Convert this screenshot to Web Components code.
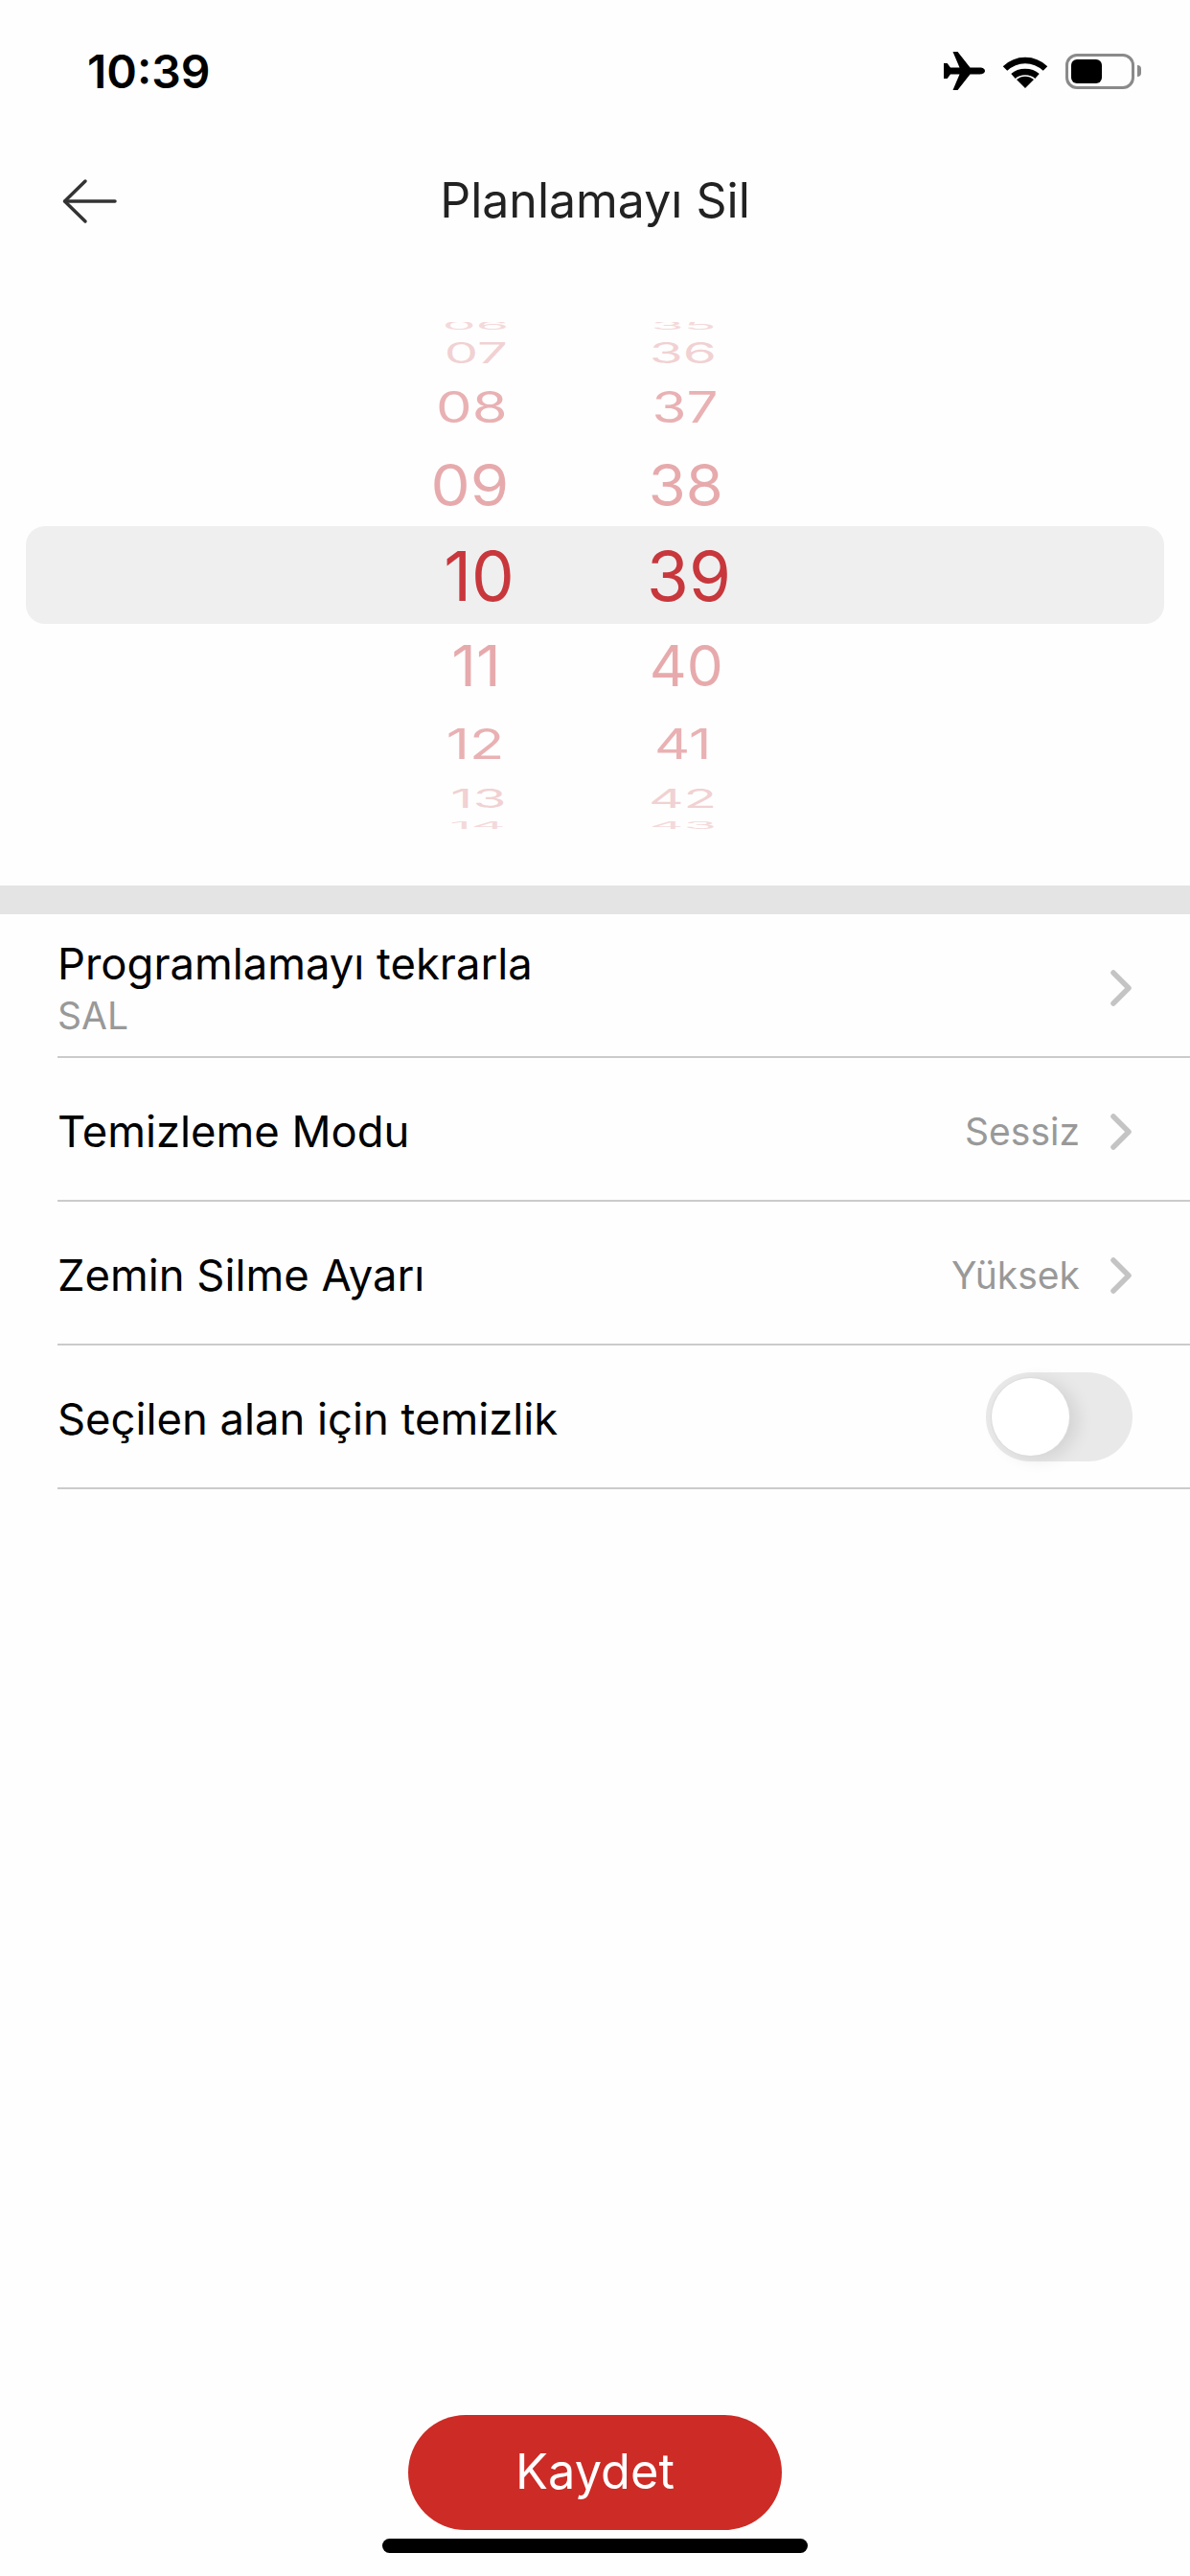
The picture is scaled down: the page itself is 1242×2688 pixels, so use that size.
<!DOCTYPE html>
<html lang="tr">
<head>
<meta charset="utf-8">
<title>Planlamayı Sil</title>
<style>
  html, body { margin: 0; background: #fefefe; }
  body { font-family: Inter, "Liberation Sans", sans-serif; }
  x-app { width: 1242px; height: 2688px; }
</style>
</head>
<body>
<x-app>
  <x-status-bar time="10:39"></x-status-bar>
  <x-nav-bar>Planlamayı Sil</x-nav-bar>
  <x-time-picker>
    <x-wheel slot="hours">
      <x-wheel-row h="14" sy=".16" sx=".78" o=".18" dx="-2">06</x-wheel-row>
      <x-wheel-row h="44" sy=".41" sx=".79" o=".22" dx="-1">07</x-wheel-row>
      <x-wheel-row h="68" sy=".63" sx=".84" o=".38" dx="-6">08</x-wheel-row>
      <x-wheel-row h="96" sy=".85" sx=".92" o=".42" dx="-8">09</x-wheel-row>
      <x-wheel-row h="94" selected dx="2">10</x-wheel-row>
      <x-wheel-row h="92" sy=".83" sx=".89" o=".42" dx="-1">11</x-wheel-row>
      <x-wheel-row h="72" sy=".62" sx=".84" o=".38" dx="-2">12</x-wheel-row>
      <x-wheel-row h="42" sy=".39" sx=".8" o=".22" dx="1">13</x-wheel-row>
      <x-wheel-row h="15" sy=".14" sx=".78" o=".18">14</x-wheel-row>
    </x-wheel>
    <x-wheel slot="minutes">
      <x-wheel-row h="14" sy=".16" sx=".78" o=".18" dx="-2">35</x-wheel-row>
      <x-wheel-row h="44" sy=".41" sx=".8" o=".22" dx="-3">36</x-wheel-row>
      <x-wheel-row h="68" sy=".63" sx=".82" o=".38" dx="-1">37</x-wheel-row>
      <x-wheel-row h="96" sy=".85" sx=".89" o=".42">38</x-wheel-row>
      <x-wheel-row h="94" selected dx="3">39</x-wheel-row>
      <x-wheel-row h="92" sy=".83" sx=".85" o=".42">40</x-wheel-row>
      <x-wheel-row h="72" sy=".62" sx=".81" o=".38" dx="-3">41</x-wheel-row>
      <x-wheel-row h="42" sy=".39" sx=".8" o=".22" dx="-3">42</x-wheel-row>
      <x-wheel-row h="15" sy=".14" sx=".78" o=".18" dx="-3">43</x-wheel-row>
    </x-wheel>
  </x-time-picker>
  <x-setting-list>
    <x-setting-row label="Programlamayı tekrarla" sub="SAL" chevron></x-setting-row>
    <x-setting-row label="Temizleme Modu" value="Sessiz" chevron></x-setting-row>
    <x-setting-row label="Zemin Silme Ayarı" value="Yüksek" chevron></x-setting-row>
    <x-setting-row label="Seçilen alan için temizlik"><x-toggle></x-toggle></x-setting-row>
  </x-setting-list>
  <x-save-bar>Kaydet</x-save-bar>
</x-app>

<script>
class XApp extends HTMLElement {
  constructor() {
    super();
    this.attachShadow({ mode: "open" }).innerHTML = /* html */`
      <style>
        :host { display: flex; flex-direction: column; background: #fefefe; overflow: hidden; }
      </style>
      <slot></slot>`;
  }
}

class XStatusBar extends HTMLElement {
  constructor() {
    super();
    this.attachShadow({ mode: "open" });
  }

  connectedCallback() {
    this.shadowRoot.innerHTML = /* html */`
      <style>
        :host { display: flex; align-items: center; justify-content: space-between; height: 148px; padding: 0 51px 0 91px; box-sizing: border-box; }
        .time { font: 600 48px Inter, "Liberation Sans", sans-serif; color: #000; letter-spacing: 0; }
        .icons { display: flex; align-items: center; }
        .plane { margin-right: 18px; }
        .wifi { margin-right: 18px; }
        .battery { position: relative; width: 72px; height: 37px; box-sizing: border-box; border: 3px solid #8a8a8a; border-radius: 12px; padding: 3px; }
        .battery i { display: block; width: 32px; height: 100%; background: #000; border-radius: 6px; }
        .tip { width: 4px; height: 12px; margin-left: 3px; background: #8a8a8a; border-radius: 0 4px 4px 0; }
      </style>
      <span class="time">${this.getAttribute("time")}</span>
      <div class="icons">
        <svg class="plane" width="43" height="40" viewBox="0 0 43 40"><path d="M43 20c0-2-2.400-3.400-5-3.400H27.500L14.500 0H9.500L16.500 16.600H7L3.600 12H0v16h3.600L7 23.400h9.500L9.500 40h5l13-16.600H38c2.600 0 5-1.400 5-3.400z" fill="#000"/></svg>
        <svg class="wifi" width="48" height="35" viewBox="0 0 48 35" fill="none" stroke="#000" stroke-width="6.500"><path d="M3 14.500C15 3 33 3 45 14.500"/><path d="M11.500 22.500C18 16.500 30 16.500 36.500 22.500"/><path d="M15 26L24 35L33 26C28 21.500 20 21.500 15 26z" fill="#000" stroke="none"/></svg>
        <div class="battery"><i></i></div>
        <div class="tip"></div>
      </div>`;
  }
}

class XNavBar extends HTMLElement {
  constructor() {
    super();
    this.attachShadow({ mode: "open" }).innerHTML = /* html */`
      <style>
        :host { display: grid; grid-template-columns: 200px 1fr 200px; align-items: center; height: 124px; padding: 0 64px; box-sizing: border-box; }
        svg { display: block; }
        .title { text-align: center; font: 400 50px Inter, "Liberation Sans", sans-serif; color: #222; margin-top: -3px; }
      </style>
      <svg width="60" height="48" viewBox="0 0 60 48" fill="none" stroke="#333" stroke-width="3.500" stroke-linecap="round" stroke-linejoin="round"><path d="M56 24H4"/><path d="M25 3L3.500 24L25 45"/></svg>
      <div class="title"><slot></slot></div>`;
  }
}

class XTimePicker extends HTMLElement {
  constructor() {
    super();
    this.attachShadow({ mode: "open" }).innerHTML = /* html */`
      <style>
        :host { display: block; position: relative; height: 652px; padding: 64px 28px 58px 0; box-sizing: border-box; }
        .band { position: absolute; left: 27px; right: 27px; top: 277px; height: 102px; background: #efefef; border-radius: 20px; }
        .wheels { position: relative; display: flex; justify-content: center; height: 530px; overflow: hidden; }
      </style>
      <div class="band"></div>
      <div class="wheels"><slot name="hours"></slot><slot name="minutes"></slot></div>`;
  }
}

class XWheel extends HTMLElement {
  constructor() {
    super();
    this.attachShadow({ mode: "open" }).innerHTML = /* html */`
      <style>
        :host { display: flex; flex-direction: column; width: 218px; margin-top: -4px; }
      </style>
      <slot></slot>`;
  }
}

class XWheelRow extends HTMLElement {
  constructor() {
    super();
    this.attachShadow({ mode: "open" });
  }

  connectedCallback() {
    const h = this.getAttribute("h");
    const sx = this.getAttribute("sx") || 1;
    const sy = this.getAttribute("sy") || 1;
    const dx = this.getAttribute("dx") || 0;
    const o = this.getAttribute("o") || 1;
    this.shadowRoot.innerHTML = /* html */`
      <style>
        :host { display: flex; align-items: center; justify-content: center; height: ${h}px; flex: none; }
        span { display: inline-block; font: 400 71px/1 Inter, "Liberation Sans", sans-serif; color: #c8373c; opacity: ${o}; transform: translateX(${dx}px) scale(${sx}, ${sy}); }
      </style>
      <span><slot></slot></span>`;
  }
}

class XSettingList extends HTMLElement {
  constructor() {
    super();
    this.attachShadow({ mode: "open" }).innerHTML = /* html */`
      <style>
        :host { display: block; border-top: 30px solid #e4e4e4; }
      </style>
      <slot></slot>`;
  }
}

class XSettingRow extends HTMLElement {
  constructor() {
    super();
    this.attachShadow({ mode: "open" });
  }

  connectedCallback() {
    const sub = this.getAttribute("sub");
    const value = this.getAttribute("value");
    const chevron = this.hasAttribute("chevron");
    this.shadowRoot.innerHTML = /* html */`
      <style>
        :host { display: flex; align-items: center; height: 150px; margin-left: 60px; padding: 5px 60px 0 0; box-sizing: border-box; border-bottom: 2px solid #cbcbcb; }
        .text { flex: 1; display: flex; flex-direction: column; }
        .label { font: 400 45.400px/56px Inter, "Liberation Sans", sans-serif; color: #000; }
        .sub { font: 400 39px/46px Inter, "Liberation Sans", sans-serif; color: #999; margin-top: 3px; }
        .value { font: 400 39px Inter, "Liberation Sans", sans-serif; color: #999; margin-right: 31px; }
        svg { display: block; }
        ::slotted(x-toggle) { margin-top: -5px; }
      </style>
      <div class="text">
        <span class="label">${this.getAttribute("label")}</span>
        ${sub ? `<span class="sub">${sub}</span>` : ""}
      </div>
      ${value ? `<span class="value">${value}</span>` : ""}
      ${chevron ? `<svg width="24" height="40" viewBox="0 0 24 40" fill="none" stroke="#c4c4c4" stroke-width="5.500" stroke-linecap="round" stroke-linejoin="round"><path d="M4 4L20 20L4 36"/></svg>` : ""}
      <slot></slot>`;
  }
}

class XToggle extends HTMLElement {
  constructor() {
    super();
    this.attachShadow({ mode: "open" }).innerHTML = /* html */`
      <style>
        :host { display: block; width: 153px; height: 93px; box-sizing: border-box; padding: 6px; border-radius: 47px; background: #e9e9e9; }
        .thumb { width: 81px; height: 81px; border-radius: 50%; background: #fff; box-shadow: 0 0 0 1px #dcdcdc, 8px 3px 18px rgba(0, 0, 0, .1); }
      </style>
      <div class="thumb"></div>`;
  }
}

class XSaveBar extends HTMLElement {
  constructor() {
    super();
    this.attachShadow({ mode: "open" }).innerHTML = /* html */`
      <style>
        :host { display: flex; flex-direction: column; align-items: center; margin-top: auto; padding-bottom: 24px; }
        button { width: 390px; height: 120px; border: 0; border-radius: 60px; background: #cd2b26; color: #fff; font: 400 50.500px Inter, "Liberation Sans", sans-serif; padding: 0 0 3px; }
        .home { width: 444px; height: 15px; margin-top: 9px; border-radius: 8px; background: #000; }
      </style>
      <button><slot></slot></button>
      <div class="home"></div>`;
  }
}

customElements.define("x-app", XApp);
customElements.define("x-status-bar", XStatusBar);
customElements.define("x-nav-bar", XNavBar);
customElements.define("x-time-picker", XTimePicker);
customElements.define("x-wheel", XWheel);
customElements.define("x-wheel-row", XWheelRow);
customElements.define("x-setting-list", XSettingList);
customElements.define("x-setting-row", XSettingRow);
customElements.define("x-toggle", XToggle);
customElements.define("x-save-bar", XSaveBar);
</script>
</body>
</html>
